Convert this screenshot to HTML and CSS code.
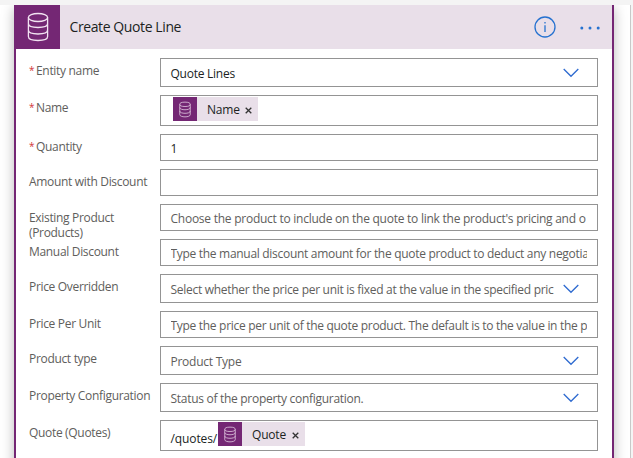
FILE: index.html
```
<!DOCTYPE html>
<html lang="en">
<head>
<meta charset="utf-8">
<title>Create Quote Line</title>
<link rel="stylesheet" href="styles.css">
</head>
<body>
<svg class="defs" width="0" height="0">
  <symbol id="db" viewBox="0 0 22 30">
    <ellipse cx="11" cy="5.5" rx="9.6" ry="4"/>
    <path d="M1.4 5.5V24.5C1.4 29.8 20.6 29.8 20.6 24.5V5.5M1.4 11.5C1.4 16.8 20.6 16.8 20.6 11.5M1.4 18C1.4 23.3 20.6 23.3 20.6 18"/>
  </symbol>
  <symbol id="chevron" viewBox="0 0 16 10"><path d="M.7 1L8 8.3 15.3 1"/></symbol>
</svg>
<div class="canvas">
  <section class="card">
    <header class="head">
      <div class="head-icon"><svg class="db"><use href="#db"/></svg></div>
      <h1 class="title">Create Quote Line</h1>
      <svg class="info" viewBox="0 0 22 22"><circle cx="11" cy="11" r="10"/><path d="M11 9.2V16"/><path d="M11 6V7.6"/></svg>
      <svg class="more" viewBox="0 0 20 4"><circle cx="1.8" cy="2" r="1.5"/><circle cx="10" cy="2" r="1.5"/><circle cx="18.2" cy="2" r="1.5"/></svg>
    </header>
    <div class="form">
      <div class="row select"><label class="label"><i class="req">*</i>Entity name</label><div class="field"><span class="text value">Quote Lines</span><svg class="chevron"><use href="#chevron"/></svg></div></div>
      <div class="row tokens"><label class="label"><i class="req">*</i>Name</label><div class="field"><span class="token token-name"><span class="token-icon"><svg class="db"><use href="#db"/></svg></span><span class="token-text">Name</span><svg class="close" viewBox="0 0 7 7"><path d="M.7.7L6.3 6.3M6.3.7L.7 6.3"/></svg></span></div></div>
      <div class="row"><label class="label"><i class="req">*</i>Quantity</label><div class="field"><span class="text value">1</span></div></div>
      <div class="row"><label class="label">Amount with Discount</label><div class="field"></div></div>
      <div class="row"><label class="label two-line">Existing Product (Products)</label><div class="field"><span class="text">Choose the product to include on the quote to link the product's pricing and o</span></div></div>
      <div class="row"><label class="label">Manual Discount</label><div class="field"><span class="text tight clip">Type the manual discount amount for the quote product to deduct any negotia</span></div></div>
      <div class="row select"><label class="label">Price Overridden</label><div class="field"><span class="text tight">Select whether the price per unit is fixed at the value in the specified pric</span><svg class="chevron"><use href="#chevron"/></svg></div></div>
      <div class="row"><label class="label">Price Per Unit</label><div class="field"><span class="text clip">Type the price per unit of the quote product. The default is to the value in the p</span></div></div>
      <div class="row select"><label class="label">Product type</label><div class="field"><span class="text">Product Type</span><svg class="chevron"><use href="#chevron"/></svg></div></div>
      <div class="row select"><label class="label">Property Configuration</label><div class="field"><span class="text tight">Status of the property configuration.</span><svg class="chevron"><use href="#chevron"/></svg></div></div>
      <div class="row tokens"><label class="label">Quote (Quotes)</label><div class="field"><span class="prefix">/quotes/</span><span class="token token-quote"><span class="token-icon"><svg class="db"><use href="#db"/></svg></span><span class="token-text">Quote</span><svg class="close" viewBox="0 0 7 7"><path d="M.7.7L6.3 6.3M6.3.7L.7 6.3"/></svg></span></div></div>
    </div>
  </section>
</div>
</body>
</html>
```
FILE: styles.css
```
* { box-sizing: border-box; }
body {
  margin: 0;
  height: 458px;
  padding-top: 5px;
  overflow: hidden;
  background: #f4f4f4;
  font: 12px/15px "Open Sans", "Noto Sans", sans-serif;
  color: #605e5c;
}
.defs { position: absolute; }
.canvas {
  width: 631px;
  height: 453px;
  padding: 0 16px 0 14px;
  overflow: hidden;
  background: #fff;
  border-right: 1px solid #c8c8c8;
}
.card {
  width: 600px;
  height: 480px;
  background: #fff;
  border: solid #742774;
  border-width: 0 2px;
  box-shadow: 0 3px 12px rgba(0, 0, 0, .28);
}
.head {
  display: flex;
  align-items: center;
  height: 44px;
  margin-left: -2px;
  background: #e9dfe9;
}
.head-icon {
  display: flex;
  align-items: center;
  justify-content: center;
  width: 46px;
  height: 44px;
  background: #742774;
}
svg { fill: none; flex: none; }
.db { stroke: #f2e3f2; stroke-width: 1.3; }
.head-icon .db { width: 22px; height: 30px; margin-left: 2px; }
.title {
  flex: 1;
  margin: 0 0 0 9.5px;
  font-size: 14px;
  line-height: 20px;
  font-weight: 400;
  letter-spacing: -.4px;
  color: #201f1e;
}
.info { width: 22px; height: 22px; margin-right: 24px; stroke: #2672d0; stroke-width: 1.3; }
.more { width: 20px; height: 4px; margin: 2px 12px 0 0; fill: #2672d0; }
.form {
  display: flex;
  flex-direction: column;
  gap: 8px;
  padding: 9px 14px 0 13px;
}
.row { display: flex; height: 27px; }
.row.select { height: 29px; }
.row.tokens { height: 31px; }
.label {
  width: 131px;
  padding: 5px 5px 0 0;
  letter-spacing: -.32px;
}
.label.two-line { padding-top: 6px; }
.req {
  display: inline-block;
  width: 7px;
  font-size: 10px;
  line-height: 10px;
  vertical-align: 1px;
  font-style: normal;
  color: #d13438;
}
.field {
  display: flex;
  align-items: center;
  flex: 1;
  min-width: 0;
  padding: 0 10px 0 9.5px;
  background: #fff;
  border: 1px solid #949494;
}
.text {
  flex: 1;
  min-width: 0;
  white-space: nowrap;
  letter-spacing: -.25px;
  padding-top: 1px;
}
.text.tight { letter-spacing: -.29px; }
.text.clip { overflow: hidden; letter-spacing: -.3px; }
.value, .prefix { color: #201f1e; }
.chevron { width: 16px; height: 10px; margin: 1px 8px 0 7px; stroke: #2f6bd0; stroke-width: 1.3; }
.tokens .field { align-items: flex-start; padding-top: 1px; }
.token {
  display: flex;
  align-items: center;
  height: 24px;
  background: #e9dfe9;
  color: #201f1e;
}
.token-name { width: 85px; margin-left: 2.5px; }
.token-quote { width: 87px; margin-left: 1.5px; }
.token-icon {
  display: flex;
  align-items: center;
  justify-content: center;
  width: 24px;
  height: 24px;
  background: #742774;
}
.token-icon .db { width: 12px; height: 17px; stroke-width: 1.6; opacity: .8; }
.token-text { flex: 1; padding-left: 10px; letter-spacing: -.2px; }
.close { width: 7px; height: 7px; margin: 2px 6px 0 0; stroke: #333; stroke-width: 1.3; }
.prefix { width: 46px; padding-top: 9px; letter-spacing: -.1px; }
```
